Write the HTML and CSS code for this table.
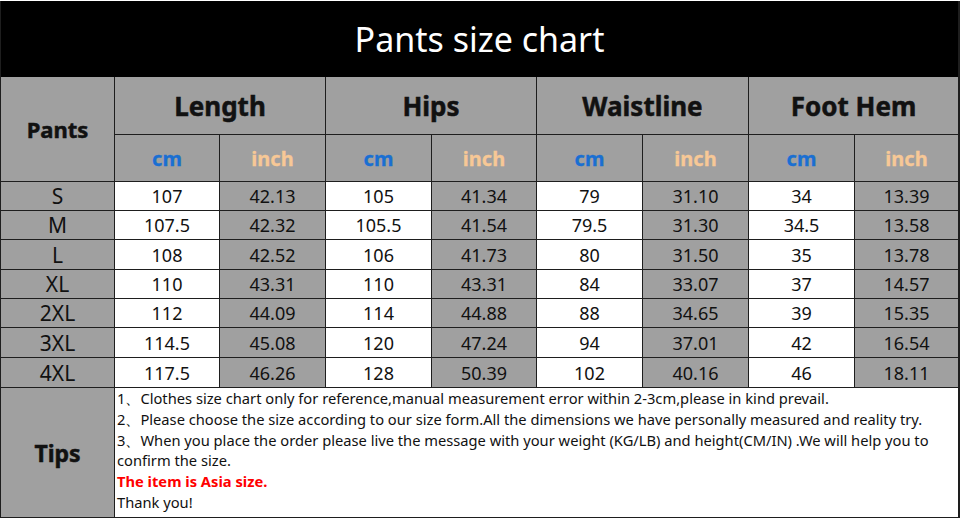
FILE: index.html
```html
<!DOCTYPE html>
<html>
<head>
<meta charset="utf-8">
<link rel="stylesheet" href="styles.css">
</head>
<body>
<div class="chart">
  <div class="title">Pants size chart</div>
  <div class="hd pants">Pants</div>
  <div class="hd grp">Length</div>
  <div class="hd grp">Hips</div>
  <div class="hd grp">Waistline</div>
  <div class="hd grp">Foot Hem</div>
  <div class="unit cm">cm</div><div class="unit in">inch</div>
  <div class="unit cm">cm</div><div class="unit in">inch</div>
  <div class="unit cm">cm</div><div class="unit in">inch</div>
  <div class="unit cm">cm</div><div class="unit in">inch</div>

  <div class="sz">S</div><div class="v w">107</div><div class="v">42.13</div><div class="v w">105</div><div class="v">41.34</div><div class="v w">79</div><div class="v">31.10</div><div class="v w">34</div><div class="v">13.39</div>
  <div class="sz">M</div><div class="v w">107.5</div><div class="v">42.32</div><div class="v w">105.5</div><div class="v">41.54</div><div class="v w">79.5</div><div class="v">31.30</div><div class="v w">34.5</div><div class="v">13.58</div>
  <div class="sz">L</div><div class="v w">108</div><div class="v">42.52</div><div class="v w">106</div><div class="v">41.73</div><div class="v w">80</div><div class="v">31.50</div><div class="v w">35</div><div class="v">13.78</div>
  <div class="sz">XL</div><div class="v w">110</div><div class="v">43.31</div><div class="v w">110</div><div class="v">43.31</div><div class="v w">84</div><div class="v">33.07</div><div class="v w">37</div><div class="v">14.57</div>
  <div class="sz">2XL</div><div class="v w">112</div><div class="v">44.09</div><div class="v w">114</div><div class="v">44.88</div><div class="v w">88</div><div class="v">34.65</div><div class="v w">39</div><div class="v">15.35</div>
  <div class="sz">3XL</div><div class="v w">114.5</div><div class="v">45.08</div><div class="v w">120</div><div class="v">47.24</div><div class="v w">94</div><div class="v">37.01</div><div class="v w">42</div><div class="v">16.54</div>
  <div class="sz">4XL</div><div class="v w">117.5</div><div class="v">46.26</div><div class="v w">128</div><div class="v">50.39</div><div class="v w">102</div><div class="v">40.16</div><div class="v w">46</div><div class="v">18.11</div>

  <div class="hd tipshd">Tips</div>
  <div class="tips">
    <p>1、Clothes size chart only for reference,manual measurement error within 2-3cm,please in kind prevail.</p>
    <p>2、Please choose the size according to our size form.All the dimensions we have personally measured and reality try.</p>
    <p>3、When you place the order please live the message with your weight (KG/LB) and height(CM/IN) .We will help you to confirm the size.</p>
    <p class="red">The item is Asia size.</p>
    <p>Thank you!</p>
  </div>
</div>
</body>
</html>
```

FILE: styles.css
```css
html, body {
  margin: 0;
  padding: 0;
  background: #ffffff;
}
body {
  font-family: "Noto Sans", "Open Sans", sans-serif;
  color: #111;
}
.chart {
  display: grid;
  width: 958px;
  margin-top: 1px;
  padding: 0 1px 1px 1px;
  gap: 1px;
  background: #1e1e1e;
  grid-template-columns: 113px 104px 105px 105px 104px 105px 105px 105px 103px;
  grid-template-rows: 75px 57px 46px 28px 28px 29px 28px 28px 29px 29px 129px;
}
.chart > div {
  background: #a0a0a0;
  display: flex;
  align-items: center;
  justify-content: center;
}
.chart > .title {
  grid-column: 1 / span 9;
  background: #000;
  color: #fff;
  font-size: 34px;
  margin-bottom: -1px;
}
.hd {
  font-weight: 700;
  -webkit-text-stroke: 0.5px currentColor;
}
.pants {
  grid-row: 2 / span 2;
  font-size: 22px;
}
.grp {
  grid-column: span 2;
  font-size: 26px;
}
.unit {
  font-weight: 700;
  font-size: 20px;
  -webkit-text-stroke: 0.3px currentColor;
}
.cm { color: #1a6fd2; }
.in { color: #f7c896; }
.sz {
  font-size: 21px;
}
.v {
  font-size: 18px;
}
.chart > .w {
  background: #fff;
}
.tipshd {
  font-size: 23px;
}
.chart > .tips {
  grid-column: 2 / span 8;
  background: #fff;
  display: block;
  padding: 0 2px;
  font-size: 14.7px;
  line-height: 20.8px;
}
.tips p {
  margin: 0;
}
.tips .red {
  color: #f00;
  font-weight: 700;
}
```
